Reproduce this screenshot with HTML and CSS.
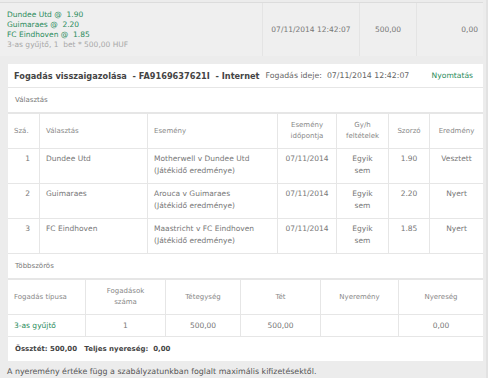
FILE: index.html
```html
<!DOCTYPE html>
<html lang="hu">
<head>
    <meta charset="UTF-8">
    <title>Fogadás visszaigazolása</title>
    <link rel="stylesheet" href="styles.css">
</head>
<body>
    <div class="page">
        <!-- Collapsed slip row -->
        <div class="slip-row">
            <div class="slip-cell slip-sel">
                <div class="green">Dundee Utd @&nbsp; 1.90</div>
                <div class="green">Guimaraes @&nbsp; 2.20</div>
                <div class="green">FC Eindhoven @&nbsp; 1.85</div>
                <div class="muted">3-as gyűjtő, 1&nbsp; bet * 500,00 HUF</div>
            </div>
            <div class="slip-cell slip-date">07/11/2014 12:42:07</div>
            <div class="slip-cell slip-stake">500,00</div>
            <div class="slip-cell slip-win">0,00</div>
        </div>

        <!-- Receipt card -->
        <div class="card">
            <div class="card-head">
                <span class="title">Fogadás visszaigazolása&nbsp; - FA9169637621I&nbsp; - Internet</span>
                <span class="time">Fogadás ideje:&nbsp; 07/11/2014 12:42:07</span>
                <a class="print" href="#">Nyomtatás</a>
            </div>

            <div class="section">Választás</div>
            <table class="grid selections">
                <thead>
                    <tr>
                        <th class="c-no">Szá.</th>
                        <th class="c-sel">Választás</th>
                        <th class="c-ev">Esemény</th>
                        <th class="c-date">Esemény időpontja</th>
                        <th class="c-cond">Gy/h feltételek</th>
                        <th class="c-odd">Szorzó</th>
                        <th class="c-res">Eredmény</th>
                    </tr>
                </thead>
                <tbody>
                    <tr>
                        <td class="c-no">1</td>
                        <td>Dundee Utd</td>
                        <td>Motherwell v Dundee Utd<br>(Játékidő eredménye)</td>
                        <td class="center">07/11/2014</td>
                        <td class="center">Egyik<br>sem</td>
                        <td class="center">1.90</td>
                        <td class="center">Vesztett</td>
                    </tr>
                    <tr>
                        <td class="c-no">2</td>
                        <td>Guimaraes</td>
                        <td>Arouca v Guimaraes<br>(Játékidő eredménye)</td>
                        <td class="center">07/11/2014</td>
                        <td class="center">Egyik<br>sem</td>
                        <td class="center">2.20</td>
                        <td class="center">Nyert</td>
                    </tr>
                    <tr>
                        <td class="c-no">3</td>
                        <td>FC Eindhoven</td>
                        <td>Maastricht v FC Eindhoven<br>(Játékidő eredménye)</td>
                        <td class="center">07/11/2014</td>
                        <td class="center">Egyik<br>sem</td>
                        <td class="center">1.85</td>
                        <td class="center">Nyert</td>
                    </tr>
                </tbody>
            </table>

            <div class="section">Többszörös</div>
            <table class="grid multiples">
                <thead>
                    <tr>
                        <th class="m-type">Fogadás típusa</th>
                        <th class="m-count center">Fogadások<br>száma</th>
                        <th class="m-unit center">Tétegység</th>
                        <th class="m-stake center">Tét</th>
                        <th class="m-win center">Nyeremény</th>
                        <th class="m-profit center">Nyereség</th>
                    </tr>
                </thead>
                <tbody>
                    <tr>
                        <td class="green">3-as gyűjtő</td>
                        <td class="center">1</td>
                        <td class="center">500,00</td>
                        <td class="center">500,00</td>
                        <td></td>
                        <td class="center">0,00</td>
                    </tr>
                </tbody>
            </table>

            <div class="totals">Össztét: 500,00&nbsp;&nbsp; Teljes nyereség:&nbsp; 0,00</div>
        </div>

        <p class="note">A nyeremény értéke függ a szabályzatunkban foglalt maximális kifizetésektől.</p>
    </div>
</body>
</html>
```

FILE: styles.css
```css
/* Base */
body {
    margin: 0;
    background: #fff;
    font-family: 'DejaVu Sans', Verdana, sans-serif;
    font-size: 7.5px;
    color: #666;
}
.page {
    width: 486px;
    height: 378px;
    background: #ececec;
    border-right: 2px solid #e2e2e2;
    overflow: hidden;
}
.green {
    color: #2b8c5c;
}
.muted {
    color: #a8a8a8;
}
.center {
    text-align: center;
}

/* Collapsed slip row at the top */
.slip-row {
    display: flex;
    margin-top: 2px;
    width: 483px;
    height: 53px;
    border-top: 1px solid #dcdcdc;
    background: #efefef;
}
.slip-cell {
    line-height: 10px;
    color: #777;
}
.slip-sel {
    width: 255px;
    padding-left: 7px;
    padding-top: 7px;
    border-right: 1px solid #e4e4e4;
}
.slip-date {
    width: 96px;
    padding-top: 22px;
    text-align: center;
    border-right: 1px solid #e4e4e4;
}
.slip-stake {
    width: 56px;
    padding-top: 22px;
    text-align: center;
    border-right: 1px solid #e4e4e4;
}
.slip-win {
    flex: 1;
    padding-top: 22px;
    padding-right: 5px;
    text-align: right;
}

/* Receipt card */
.card {
    margin: 8px 0 0 8px;
    width: 475px;
    background: #fff;
}
.card-head {
    display: flex;
    align-items: center;
    height: 23px;
    padding: 0 10px 0 6px;
    border-bottom: 1px solid #e6e6e6;
    white-space: nowrap;
}
.card-head .title {
    font-weight: bold;
    color: #444;
    font-size: 8.2px;
}
.card-head .time {
    margin-left: 6px;
    color: #666;
    font-size: 7.8px;
}
.card-head .print {
    margin-left: auto;
    color: #2b8c5c;
    font-size: 7.6px;
    text-decoration: none;
}
.section {
    padding: 8px 7px 0;
    height: 16px;
    color: #777;
    font-size: 7px;
    border-bottom: 1px solid #e6e6e6;
}

/* Tables */
.grid {
    width: 100%;
    border-collapse: collapse;
}
.grid th,
.grid td {
    border: 1px solid #e6e6e6;
    font-weight: normal;
    vertical-align: top;
    line-height: 12px;
}
.grid tr > :first-child {
    border-left: none;
}
.grid tr > :last-child {
    border-right: none;
}
.grid th {
    color: #888;
    font-size: 7px;
    line-height: 11px;
}
.selections th {
    height: 34px;
    padding: 0 6px;
    vertical-align: middle;
    text-align: left;
}
.selections th.c-date,
.selections th.c-cond,
.selections th.c-odd,
.selections th.c-res {
    text-align: center;
    padding: 0 2px;
}
.selections td {
    height: 30px;
    padding: 4px 6px 0;
    color: #777;
}
.selections td.center {
    padding: 4px 2px 0;
}
.selections td.c-no {
    text-align: right;
    padding-right: 9px;
}
.c-no { width: 16px; }
.c-sel { width: 95px; }
.c-ev { width: 117px; }
.c-date { width: 54px; }
.c-cond { width: 47px; }
.c-odd { width: 36px; }

.multiples th {
    height: 34px;
    padding: 0 6px;
    vertical-align: middle;
    text-align: left;
}
.multiples th.center {
    text-align: center;
}
.multiples td {
    height: 21px;
    padding: 0 6px;
    vertical-align: middle;
    color: #777;
}
.multiples td.green {
    color: #2b8c5c;
}
.m-type { width: 65px; }
.m-count { width: 67px; }
.m-unit { width: 62px; }
.m-stake { width: 67px; }
.m-win { width: 65px; }

.totals {
    padding: 0 7px;
    height: 24px;
    line-height: 24px;
    font-weight: bold;
    font-size: 7px;
    color: #444;
}
.note {
    margin: 6px 0 0 7px;
    color: #555;
    font-size: 7.9px;
}
```
